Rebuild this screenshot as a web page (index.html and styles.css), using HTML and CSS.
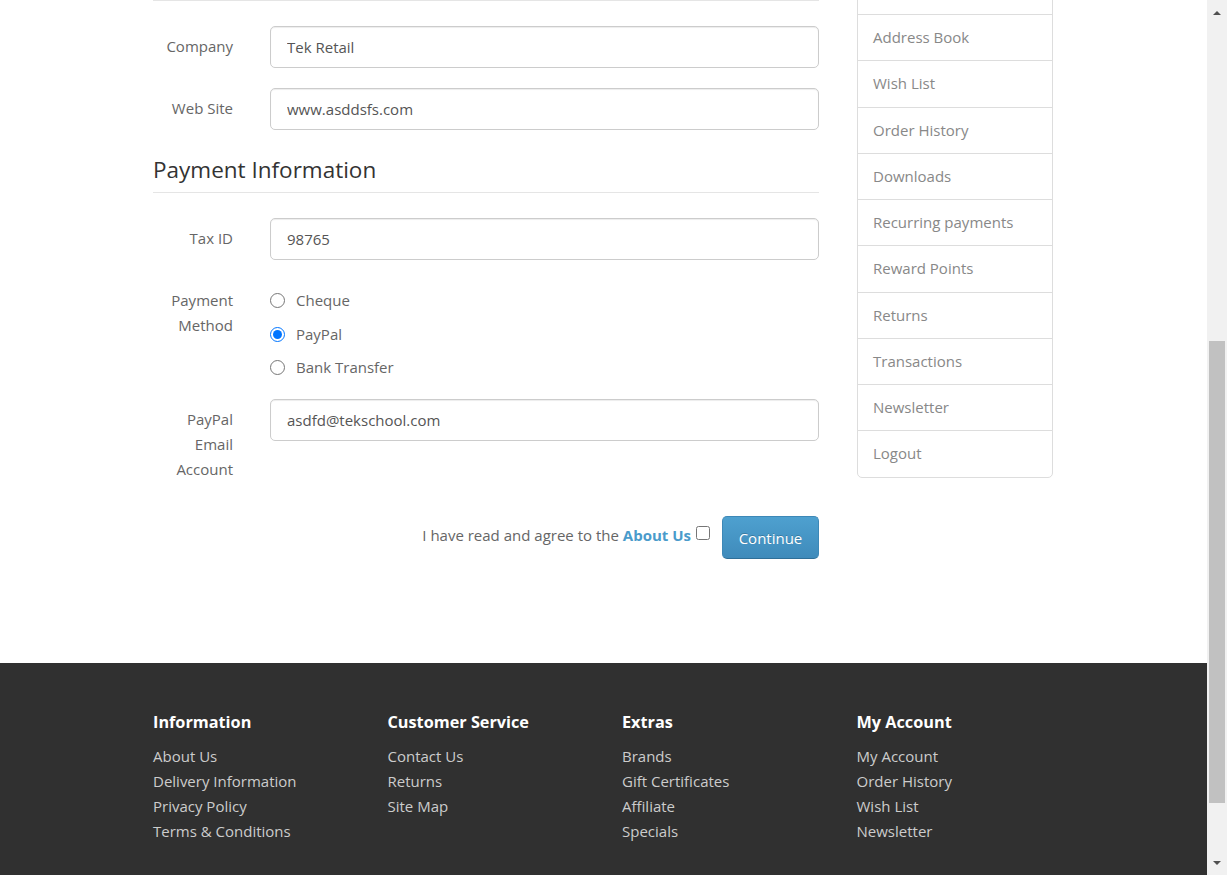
FILE: index.html
```html
<!DOCTYPE html>
<html lang="en">
<head>
<meta charset="utf-8">
<title>Affiliate Information</title>
<link rel="stylesheet" href="styles.css">
</head>
<body>
<div class="page">
  <div class="main">
    <div class="content">
      <div class="form-col">
        <div class="form-group">
          <label class="control-label">Company</label>
          <input class="form-control" type="text" value="Tek Retail">
        </div>
        <div class="form-group">
          <label class="control-label">Web Site</label>
          <input class="form-control" type="text" value="www.asddsfs.com">
        </div>
        <div class="legend">Payment Information</div>
        <div class="form-group">
          <label class="control-label">Tax ID</label>
          <input class="form-control" type="text" value="98765">
        </div>
        <div class="form-group radio-group">
          <label class="control-label">Payment Method</label>
          <div class="radios">
            <label class="radio"><input type="radio" name="pm"> Cheque</label>
            <label class="radio"><input type="radio" name="pm" checked> PayPal</label>
            <label class="radio"><input type="radio" name="pm"> Bank Transfer</label>
          </div>
        </div>
        <div class="form-group">
          <label class="control-label">PayPal Email Account</label>
          <input class="form-control" type="text" value="asdfd@tekschool.com">
        </div>
        <div class="buttons">
          <span class="agree">I have read and agree to the <a href="#" class="agree-link">About Us</a></span>
          <input type="checkbox" class="agree-box">
          <button class="btn-primary" type="button">Continue</button>
        </div>
      </div>
      <aside class="sidebar">
        <div class="list-stub"></div>
        <a href="#" class="list-item">Address Book</a>
        <a href="#" class="list-item">Wish List</a>
        <a href="#" class="list-item">Order History</a>
        <a href="#" class="list-item">Downloads</a>
        <a href="#" class="list-item">Recurring payments</a>
        <a href="#" class="list-item">Reward Points</a>
        <a href="#" class="list-item">Returns</a>
        <a href="#" class="list-item">Transactions</a>
        <a href="#" class="list-item">Newsletter</a>
        <a href="#" class="list-item last">Logout</a>
      </aside>
    </div>
    <footer class="footer">
      <div class="footer-inner">
        <div class="footer-col">
          <h5>Information</h5>
          <ul>
            <li><a href="#">About Us</a></li>
            <li><a href="#">Delivery Information</a></li>
            <li><a href="#">Privacy Policy</a></li>
            <li><a href="#">Terms &amp; Conditions</a></li>
          </ul>
        </div>
        <div class="footer-col">
          <h5>Customer Service</h5>
          <ul>
            <li><a href="#">Contact Us</a></li>
            <li><a href="#">Returns</a></li>
            <li><a href="#">Site Map</a></li>
          </ul>
        </div>
        <div class="footer-col">
          <h5>Extras</h5>
          <ul>
            <li><a href="#">Brands</a></li>
            <li><a href="#">Gift Certificates</a></li>
            <li><a href="#">Affiliate</a></li>
            <li><a href="#">Specials</a></li>
          </ul>
        </div>
        <div class="footer-col">
          <h5>My Account</h5>
          <ul>
            <li><a href="#">My Account</a></li>
            <li><a href="#">Order History</a></li>
            <li><a href="#">Wish List</a></li>
            <li><a href="#">Newsletter</a></li>
          </ul>
        </div>
      </div>
    </footer>
  </div>
  <div class="scrollbar">
    <div class="arrow up"></div>
    <div class="track">
      <div class="thumb"></div>
    </div>
    <div class="arrow down"></div>
  </div>
</div>
</body>
</html>
```

FILE: styles.css
```css
* { box-sizing: border-box; }

html, body {
  margin: 0;
  padding: 0;
  height: 875px;
  overflow: hidden;
}

body {
  font-family: "Open Sans", "Liberation Sans", sans-serif;
  font-size: 15px;
  line-height: 25px;
  color: #666;
  background: #fff;
}

a { text-decoration: none; }

.page {
  display: flex;
  height: 875px;
}

.main {
  flex: 1;
  display: flex;
  flex-direction: column;
  min-width: 0;
  overflow: hidden;
}

.content {
  flex: 1;
  width: 900px;
  margin-left: 153px;
  display: grid;
  grid-template-columns: 666px 196px;
  column-gap: 38px;
  align-items: start;
}

/* ---------- Form column ---------- */
.form-col {
  border-top: 1px solid #e5e5e5;
  padding-top: 25px;
}

.form-group {
  display: grid;
  grid-template-columns: 80px 549px;
  column-gap: 37px;
  margin-bottom: 20px;
  align-items: start;
}

.control-label {
  text-align: right;
  padding-top: 8px;
  color: #666;
}

.form-control {
  height: 42px;
  width: 549px;
  border: 1px solid #ccc;
  border-radius: 5px;
  padding: 0 16px;
  font-family: "Open Sans", "Liberation Sans", sans-serif;
  font-size: 15px;
  color: #555;
  background: #fff;
  box-shadow: inset 0 1px 1px rgba(0,0,0,0.075);
}

.legend {
  font-size: 22.5px;
  line-height: 32px;
  color: #333;
  padding: 4px 0 6px;
  border-bottom: 1px solid #e5e5e5;
  margin: 20px 0 25px;
}

.radio-group {
  margin-bottom: 19px;
}

.radios {
  display: flex;
  flex-direction: column;
  gap: 8.5px;
  padding-top: 8px;
}

.radio {
  display: flex;
  align-items: center;
  gap: 11px;
  line-height: 25px;
  color: #666;
}

.radio input {
  width: 15px;
  height: 15px;
  margin: 0;
}

.buttons {
  display: flex;
  justify-content: flex-end;
  align-items: center;
  margin-top: 34px;
}

.agree {
  color: #666;
  margin-top: -4px;
}

.agree-link {
  color: #4a9bcb;
  font-weight: bold;
}

.agree-box {
  width: 14px;
  height: 14px;
  margin: 10px 12px 0 5px;
  align-self: flex-start;
}

.btn-primary {
  height: 43px;
  width: 97px;
  padding: 0;
  font-family: "Open Sans", "Liberation Sans", sans-serif;
  font-size: 15px;
  color: #fff;
  background: linear-gradient(to bottom, #4ea0cf, #3f8bbb);
  border: 1px solid #3d88b7;
  border-bottom-color: #2f6f98;
  border-radius: 5px;
  text-shadow: 0 -1px 0 rgba(0,0,0,0.2);
}

/* ---------- Sidebar ---------- */
.sidebar {
  display: flex;
  flex-direction: column;
}

.list-stub {
  height: 15px;
  border-left: 1px solid #ddd;
  border-right: 1px solid #ddd;
  border-bottom: 1px solid #ddd;
  margin-bottom: -1px;
}

.list-item {
  display: block;
  padding: 10px 15px;
  line-height: 25.25px;
  border: 1px solid #ddd;
  margin-bottom: -1px;
  color: #888;
  background: #fff;
}

.list-item.last {
  border-radius: 0 0 5px 5px;
}

/* ---------- Footer ---------- */
.footer {
  height: 212px;
  flex: none;
  background: #303030;
  padding-top: 49px;
}

.footer-inner {
  width: 938px;
  margin-left: 134.5px;
  display: grid;
  grid-template-columns: repeat(4, 234.5px);
}

.footer-col {
  padding-left: 18.5px;
}

.footer h5 {
  margin: 0 0 12px;
  font-size: 16.25px;
  line-height: 20px;
  font-weight: bold;
  color: #fff;
}

.footer ul {
  list-style: none;
  margin: 0;
  padding: 0;
}

.footer li {
  line-height: 25px;
}

.footer a {
  color: #ccc;
}

/* ---------- Fake scrollbar ---------- */
.scrollbar {
  width: 20px;
  flex: none;
  background: #f1f1f1;
  display: flex;
  flex-direction: column;
  align-items: center;
}

.arrow {
  height: 25px;
  width: 20px;
  display: flex;
  align-items: center;
  justify-content: center;
  flex: none;
}

.arrow::before {
  content: "";
  width: 0;
  height: 0;
  border-left: 4px solid transparent;
  border-right: 4px solid transparent;
}

.arrow.up::before {
  border-bottom: 4px solid #505050;
}

.arrow.down::before {
  border-top: 4px solid #505050;
}

.track {
  flex: 1;
  width: 20px;
  padding-top: 316px;
  display: flex;
  justify-content: center;
}

.thumb {
  width: 16px;
  height: 462px;
  background: #c1c1c1;
}
```
